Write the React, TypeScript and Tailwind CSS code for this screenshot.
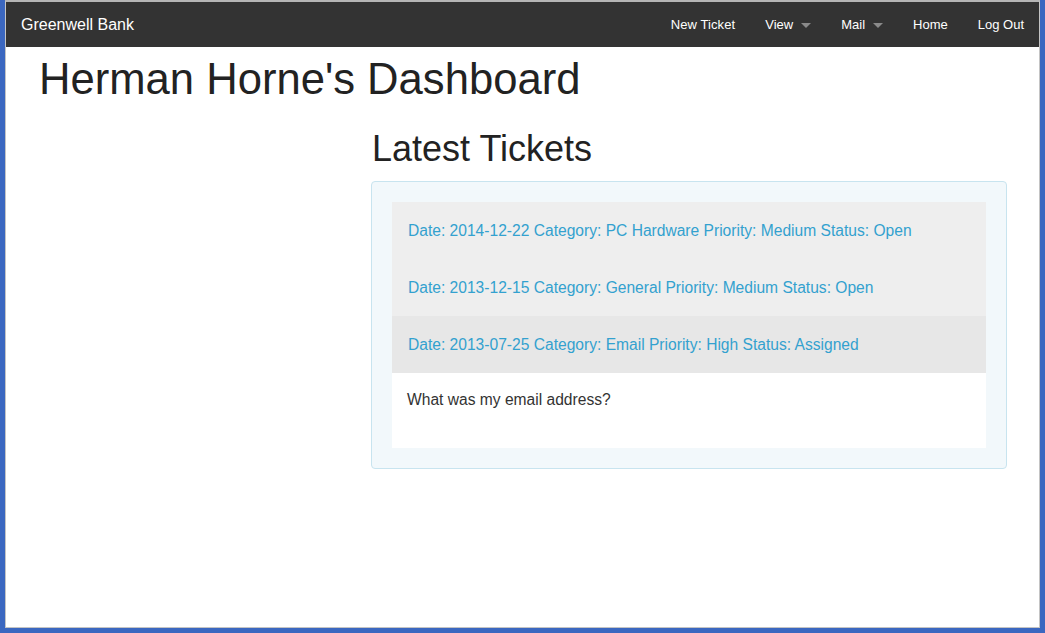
import React from "react";

const font = { fontFamily: '"Liberation Sans", Arial, sans-serif' };

function Caret() {
  return (
    <span className="ml-[8px] inline-block h-0 w-0 border-x-[5px] border-t-[5px] border-x-transparent border-t-[#8a8a8a] translate-y-[1px]" />
  );
}

export default function App() {
  const tickets = [
    { text: "Date: 2014-12-22 Category: PC Hardware Priority: Medium Status: Open", bg: "bg-[#eeeeee]" },
    { text: "Date: 2013-12-15 Category: General Priority: Medium Status: Open", bg: "bg-[#eeeeee]" },
    { text: "Date: 2013-07-25 Category: Email Priority: High Status: Assigned", bg: "bg-[#e7e7e7]" },
  ];
  return (
    <div className="w-[1045px] h-[633px] bg-[#3b67c0] px-[5px] pb-[5px] overflow-hidden" style={font}>
      <div className="h-full w-full border-x border-b border-t-2 border-x-[#c4c4c4] border-b-[#c4c4c4] border-t-[#b5b5b5] bg-white flex flex-col">
        <nav className="h-[45px] bg-[#333333] flex items-center justify-between text-white shrink-0">
          <span className="pl-[15px] text-[16px]">Greenwell Bank</span>
          <ul className="flex items-center text-[13px]">
            <li className="px-[15px] tracking-[0.1px]">New Ticket</li>
            <li className="px-[15px] flex items-center">View<Caret /></li>
            <li className="px-[15px] flex items-center">Mail<Caret /></li>
            <li className="px-[15px]">Home</li>
            <li className="px-[15px]">Log Out</li>
          </ul>
        </nav>
        <main className="text-[#222222]">
          <h1 className="text-[43.6px] leading-[1.1] mt-[9px] ml-[33px]">Herman Horne's Dashboard</h1>
          <div className="ml-[365px] mr-[32px]">
            <h2 className="text-[36px] leading-[1.1] mt-[25px] ml-[1px]">Latest Tickets</h2>
            <div className="mt-[12px] border border-[#c8e4ef] bg-[#f2f8fb] rounded-[4px] p-[20px]">
              {tickets.map((t) => (
                <div key={t.text} className={`h-[57px] flex items-center px-[16px] pt-[2px] text-[15.6px] text-[#33a1cf] ${t.bg}`}>
                  {t.text}
                </div>
              ))}
              <div className="h-[75px] bg-white pt-[16px] px-[15px] text-[15.6px] text-[#333333] leading-[22px]">
                What was my email address?
              </div>
            </div>
          </div>
        </main>
      </div>
    </div>
  );
}
